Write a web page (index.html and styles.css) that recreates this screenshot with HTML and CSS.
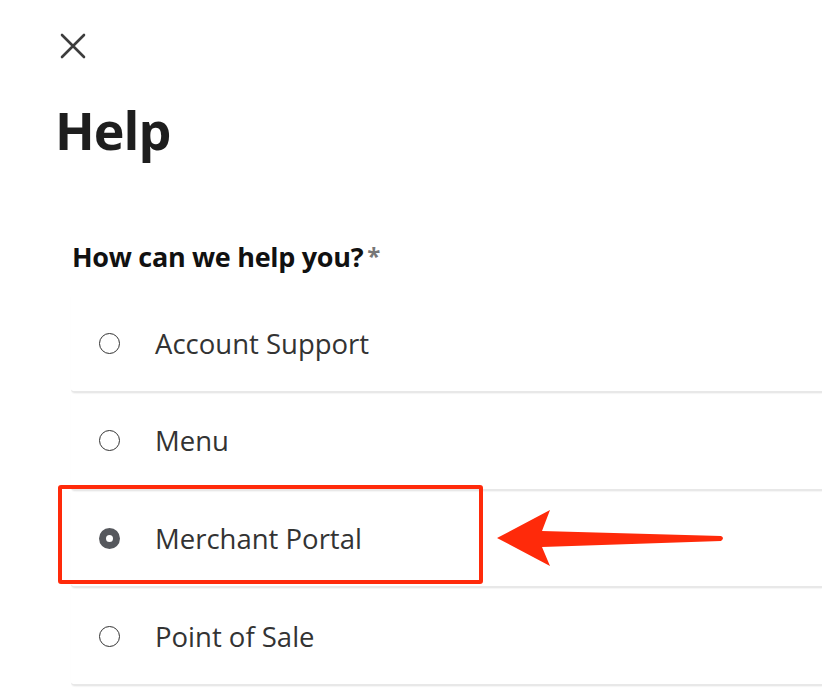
FILE: index.html
```html
<!DOCTYPE html>
<html lang="en">
<head>
<meta charset="UTF-8">
<meta name="viewport" content="width=device-width, initial-scale=1.0">
<title>Help</title>
<link rel="stylesheet" href="styles.css">
</head>
<body>
<div class="panel">
  <button class="close" aria-label="Close">
    <svg width="26" height="26" viewBox="0 0 26 26"><path d="M2 2 L24 24 M24 2 L2 24" stroke="#3d3d3d" stroke-width="2.6" stroke-linecap="round"/></svg>
  </button>
  <h1>Help</h1>

  <div class="question">How can we help you?<span class="req">*</span></div>

  <div class="options">
    <label class="option">
      <span class="radio"></span>
      <span class="text">Account Support</span>
    </label>
    <label class="option">
      <span class="radio"></span>
      <span class="text">Menu</span>
    </label>
    <label class="option">
      <span class="radio checked"></span>
      <span class="text">Merchant Portal</span>
    </label>
    <label class="option">
      <span class="radio"></span>
      <span class="text">Point of Sale</span>
    </label>
  </div>

  <!-- annotation -->
  <div class="mark"></div>
  <svg class="arrow" width="230" height="60" viewBox="0 0 230 60">
    <path d="M0 29 L53 1 L45 22 L224 27 Q228 29 224 32 L45 38 L53 57 Z" fill="#ff2a0a"/>
  </svg>
</div>
</body>
</html>
```

FILE: styles.css
```css
body {
  margin: 0;
  background-color: #fff;
  font-family: "Open Sans", Lato, sans-serif;
  color: #222;
}

.panel {
  position: relative;
  padding: 33px 0 0 55px;
  height: 663px;
  overflow: hidden;
}

.close {
  display: block;
  background: none;
  border: none;
  padding: 0;
  margin-left: 5px;
  cursor: pointer;
  width: 26px;
  height: 26px;
}

h1 {
  font-size: 52px;
  font-weight: 700;
  margin: 40px 0 0 0;
  line-height: 1.2;
  color: #1e1e1e;
  letter-spacing: -1px;
}

.question {
  margin: 77px 0 0 17px;
  font-size: 27px;
  font-weight: 700;
  color: #111;
  letter-spacing: -0.3px;
}

.req {
  color: #777;
  font-size: 24px;
  margin-left: 4px;
  vertical-align: 2px;
}

.options {
  margin: 20px 0 0 16px;
}

.option {
  display: flex;
  align-items: center;
  height: 95.7px;
  border-bottom: 2px solid #e8e8e8;
  border-bottom-left-radius: 4px;
  box-shadow: 0 1px 1px rgba(0, 0, 0, 0.04);
  cursor: pointer;
}

.radio {
  box-sizing: border-box;
  width: 21px;
  height: 21px;
  margin-left: 28px;
  margin-right: 35px;
  border: 1.6px solid #333;
  border-radius: 50%;
  flex-shrink: 0;
}

.radio.checked {
  border: 7px solid #56585d;
  background-color: #fff;
}

.text {
  font-size: 27.5px;
  color: #333;
}

.mark {
  position: absolute;
  left: 58px;
  top: 485px;
  width: 417px;
  height: 91px;
  border: 4px solid #ff2a0a;
  border-radius: 3px;
}

.arrow {
  position: absolute;
  left: 497px;
  top: 509px;
}
```
